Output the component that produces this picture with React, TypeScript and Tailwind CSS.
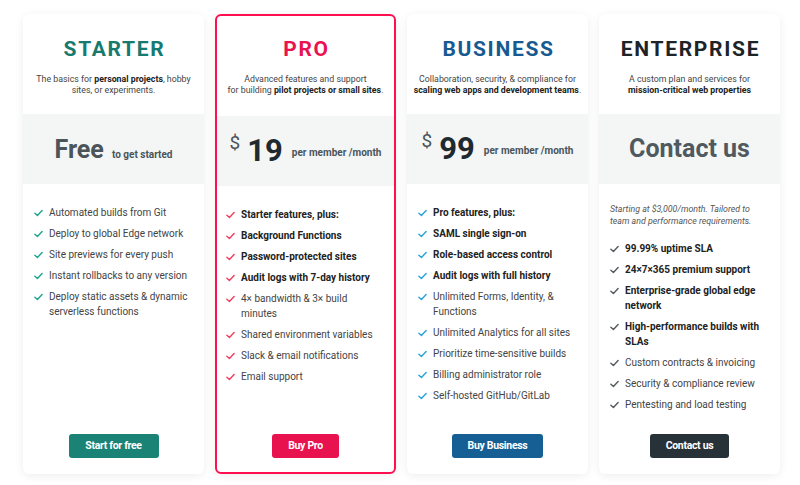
import React from "react";

type Feature = { text: string; bold?: boolean };

type Plan = {
  name: string;
  titleColor: string;
  checkColor: string;
  buttonClass: string;
  buttonLabel: string;
  desc: React.ReactNode;
  price: React.ReactNode;
  note?: string;
  features: Feature[];
  highlight?: boolean;
};

function Check({ className }: { className: string }) {
  return (
    <svg viewBox="0 0 10 8" className={"w-[9px] h-[8px] shrink-0 mt-[4px] " + className} fill="none">
      <path d="M1 4.2 L3.8 6.8 L9 1.2" stroke="currentColor" strokeWidth="1.6" strokeLinecap="round" strokeLinejoin="round" />
    </svg>
  );
}

const plans: Plan[] = [
  {
    name: "STARTER",
    titleColor: "text-[#177a6f]",
    checkColor: "text-[#1ea592]",
    buttonClass: "bg-[#1a8376] w-[90px]",
    buttonLabel: "Start for free",
    desc: (
      <>
        The basics for <b className="text-[#222]">personal projects</b>, hobby
        <br />
        sites, or experiments.
      </>
    ),
    price: (
      <div className="flex items-baseline gap-[8px] mt-[2px]">
        <span className="text-[25px] font-bold text-[#4a5459]">Free</span>
        <span className="text-[10px] font-bold text-[#4a5459]">to get started</span>
      </div>
    ),
    features: [
      { text: "Automated builds from Git" },
      { text: "Deploy to global Edge network" },
      { text: "Site previews for every push" },
      { text: "Instant rollbacks to any version" },
      { text: "Deploy static assets & dynamic serverless functions" },
    ],
  },
  {
    name: "PRO",
    titleColor: "text-[#e8134f]",
    checkColor: "text-[#f0415f]",
    buttonClass: "bg-[#e8124e] w-[67px]",
    buttonLabel: "Buy Pro",
    highlight: true,
    desc: (
      <>
        Advanced features and support
        <br />
        for building <b className="text-[#222]">pilot projects or small sites</b>.
      </>
    ),
    price: (
      <div className="flex items-center">
        <span className="text-[19px] text-[#4a5459] self-start mt-[1px] mr-[7px]">$</span>
        <span className="text-[31px] font-bold text-[#1f2a30] mr-[9px]">19</span>
        <span className="text-[10px] font-bold text-[#4a5459] mt-[2px]">per member /month</span>
      </div>
    ),
    features: [
      { text: "Starter features, plus:", bold: true },
      { text: "Background Functions", bold: true },
      { text: "Password-protected sites", bold: true },
      { text: "Audit logs with 7-day history", bold: true },
      { text: "4× bandwidth & 3× build minutes" },
      { text: "Shared environment variables" },
      { text: "Slack & email notifications" },
      { text: "Email support" },
    ],
  },
  {
    name: "BUSINESS",
    titleColor: "text-[#175a91]",
    checkColor: "text-[#2aa5d8]",
    buttonClass: "bg-[#165f94] w-[91px]",
    buttonLabel: "Buy Business",
    desc: (
      <>
        Collaboration, security, &amp; compliance for
        <br />
        <b className="text-[#222]">scaling web apps and development teams</b>.
      </>
    ),
    price: (
      <div className="flex items-center">
        <span className="text-[19px] text-[#4a5459] self-start mt-[1px] mr-[7px]">$</span>
        <span className="text-[31px] font-bold text-[#1f2a30] mr-[9px]">99</span>
        <span className="text-[10px] font-bold text-[#4a5459] mt-[2px]">per member /month</span>
      </div>
    ),
    features: [
      { text: "Pro features, plus:", bold: true },
      { text: "SAML single sign-on", bold: true },
      { text: "Role-based access control", bold: true },
      { text: "Audit logs with full history", bold: true },
      { text: "Unlimited Forms, Identity, & Functions" },
      { text: "Unlimited Analytics for all sites" },
      { text: "Prioritize time-sensitive builds" },
      { text: "Billing administrator role" },
      { text: "Self-hosted GitHub/GitLab" },
    ],
  },
  {
    name: "ENTERPRISE",
    titleColor: "text-[#1d2327]",
    checkColor: "text-[#555c60]",
    buttonClass: "bg-[#273238] w-[79px]",
    buttonLabel: "Contact us",
    desc: (
      <>
        A custom plan and services for
        <br />
        <b className="text-[#222]">mission-critical web properties</b>
      </>
    ),
    price: <span className="text-[25px] font-bold text-[#4f595f]">Contact us</span>,
    note: "Starting at $3,000/month. Tailored to team and performance requirements.",
    features: [
      { text: "99.99% uptime SLA", bold: true },
      { text: "24×7×365 premium support", bold: true },
      { text: "Enterprise-grade global edge network", bold: true },
      { text: "High-performance builds with SLAs", bold: true },
      { text: "Custom contracts & invoicing" },
      { text: "Security & compliance review" },
      { text: "Pentesting and load testing" },
    ],
  },
];

function Card({ plan }: { plan: Plan }) {
  return (
    <div
      className={
        "w-[181px] h-[460px] bg-white rounded-[6px] flex flex-col shadow-[0_2px_10px_rgba(0,0,0,0.07)] " +
        (plan.highlight ? "border-2 border-[#ff0f4f]" : "")
      }
    >
      <div className={"h-[100px] flex flex-col items-center " + (plan.highlight ? "pt-[21px]" : "pt-[23px]")}>
        <h2 className={"text-[21px] font-bold tracking-[0.08em] leading-[24px] pl-[2px] " + plan.titleColor}>
          {plan.name}
        </h2>
        <p className="mt-[13px] text-[8.8px] leading-[11px] text-[#444] text-center whitespace-nowrap">{plan.desc}</p>
      </div>
      <div className="h-[70px] bg-[#f4f6f6] flex items-center justify-center">{plan.price}</div>
      <div className={"flex-1 pt-[21px] " + (plan.highlight ? "px-[9px]" : "px-[11px]")}>
        {plan.note && (
          <p className="italic text-[8.8px] leading-[12px] text-[#555] w-[148px] -mt-[2px] mb-[14px]">{plan.note}</p>
        )}
        <ul className="flex flex-col gap-[6px]">
          {plan.features.map((f) => (
            <li key={f.text} className="flex gap-[6px]">
              <Check className={plan.checkColor} />
              <span
                className={
                  "text-[10px] leading-[15px] " + (f.bold ? "font-bold text-[#222]" : "text-[#444]")
                }
              >
                {f.text}
              </span>
            </li>
          ))}
        </ul>
      </div>
      <div className={"flex justify-center " + (plan.highlight ? "pb-[14px]" : "pb-[16px]")}>
        <button
          className={
            "h-[24px] rounded-[3px] text-white text-[10.5px] font-bold tracking-[-0.03em] " + plan.buttonClass
          }
        >
          {plan.buttonLabel}
        </button>
      </div>
    </div>
  );
}

export default function App() {
  return (
    <div
      className="w-[800px] h-[485px] bg-white flex gap-[11px] pl-[23px] pt-[14px]"
      style={{ fontFamily: "Roboto, 'Liberation Sans', sans-serif" }}
    >
      {plans.map((p) => (
        <Card key={p.name} plan={p} />
      ))}
    </div>
  );
}
